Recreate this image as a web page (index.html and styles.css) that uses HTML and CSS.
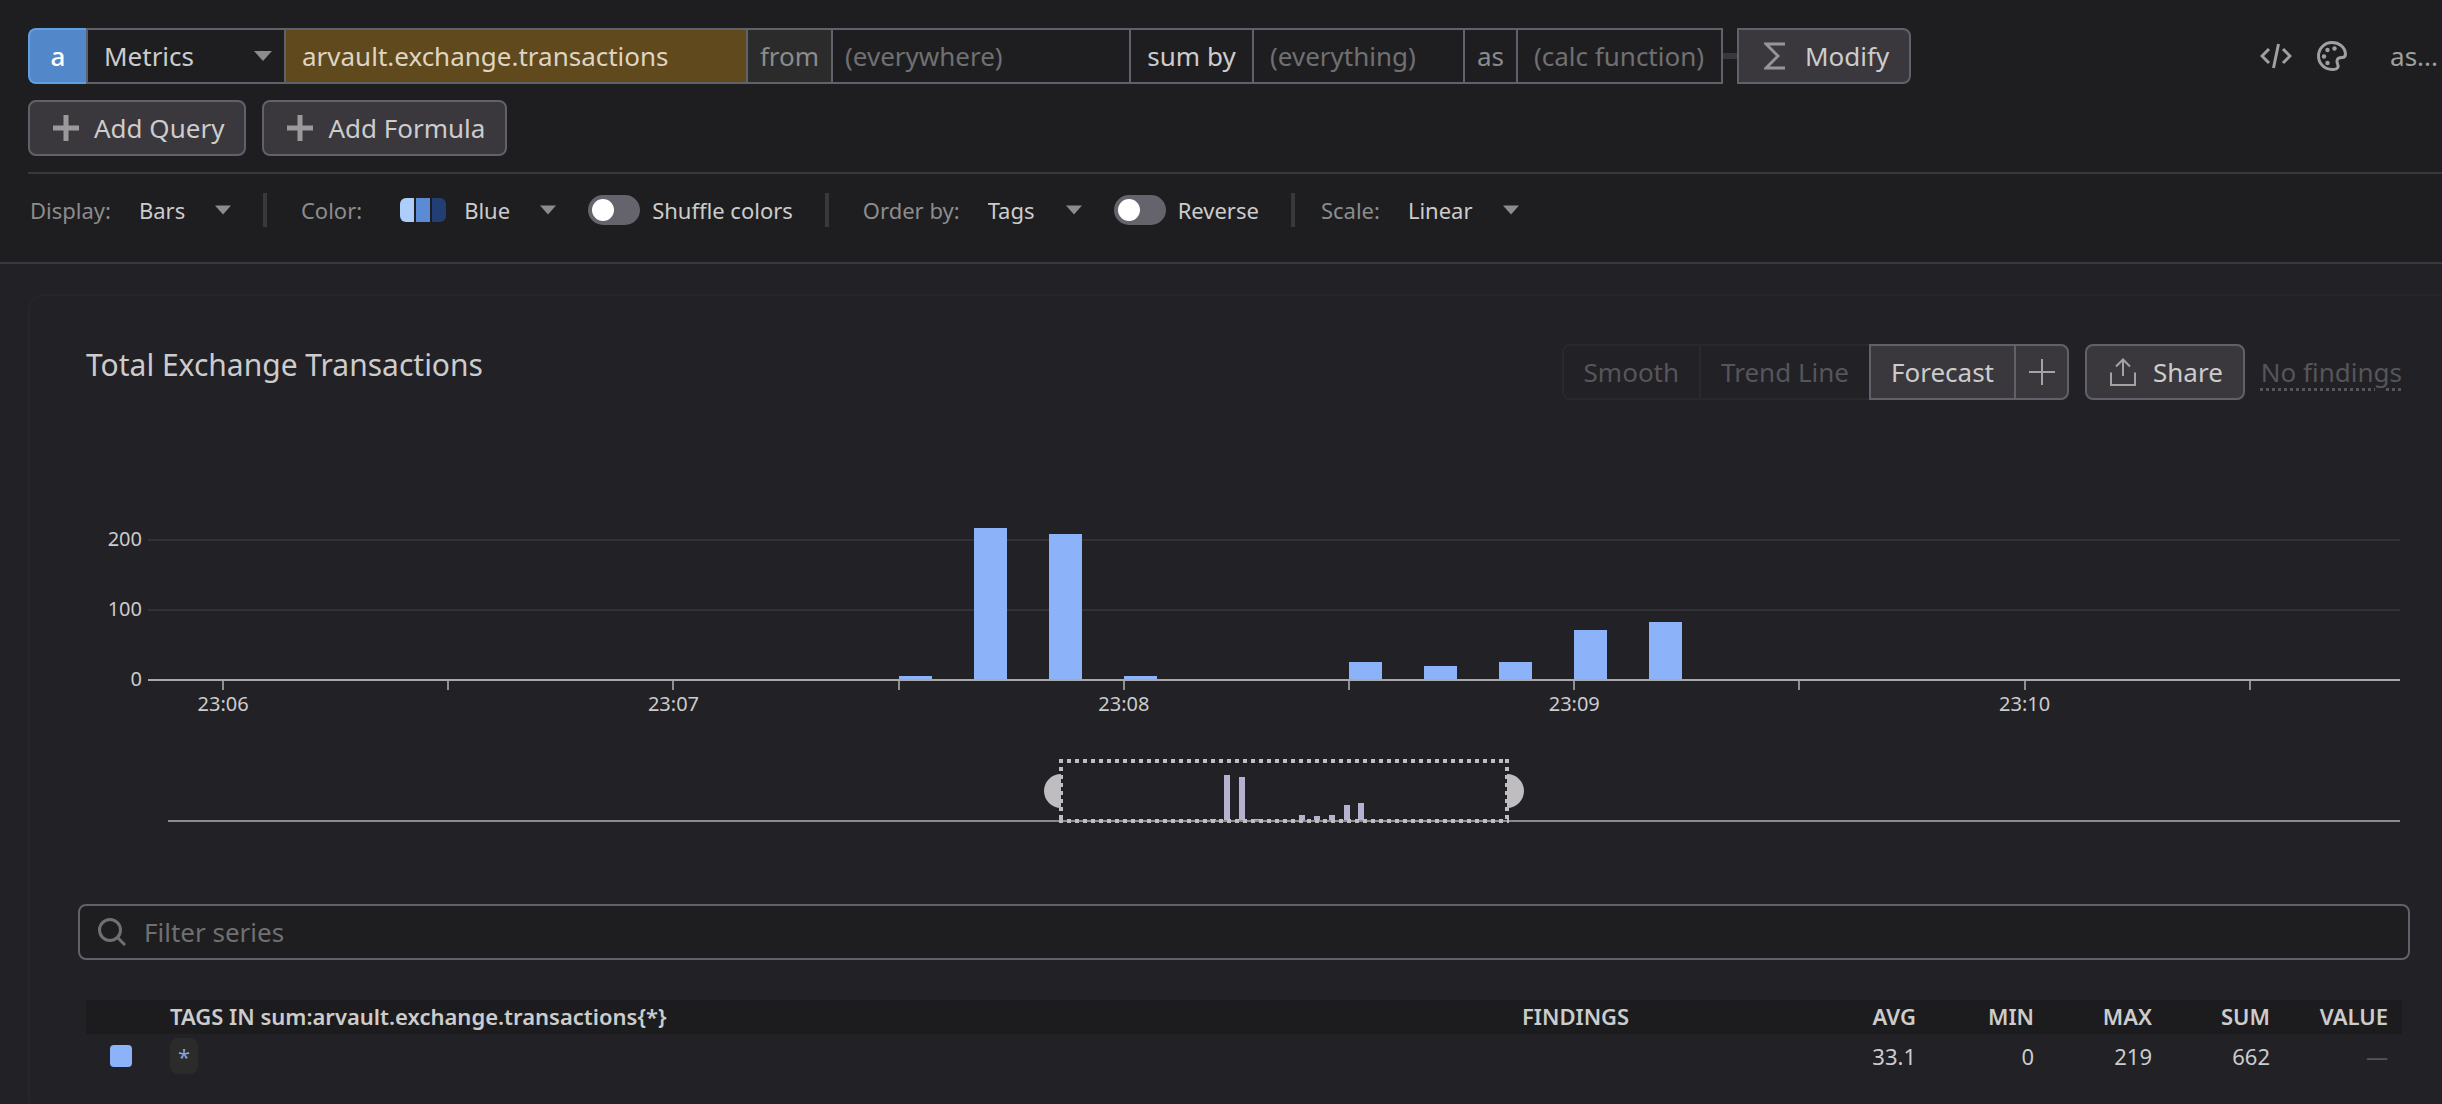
FILE: index.html
```html
<!DOCTYPE html>
<html lang="en">
<head>
<meta charset="utf-8">
<title>Metrics Explorer</title>
<link rel="stylesheet" href="styles.css">
</head>
<body>
<header class="toolbar">
  <div class="query-row">
    <form class="query">
      <button type="button" class="query-id">a</button>
      <span class="cell select source">
        <select aria-label="Data source"><option>Metrics</option></select>
        <svg class="caret" viewBox="0 0 18 10"><path d="M0 0h18l-9 10z"/></svg>
      </span>
      <input class="cell metric" aria-label="Metric" value="arvault.exchange.transactions">
      <label class="cell word from" for="scope">from</label>
      <input class="cell scope" id="scope" placeholder="(everywhere)">
      <button type="button" class="cell aggregate">sum by</button>
      <input class="cell group" aria-label="Group by" placeholder="(everything)">
      <label class="cell word as" for="calc">as</label>
      <input class="cell calc" id="calc" placeholder="(calc function)">
      <span class="connector"></span>
      <button type="button" class="btn modify">
        <svg class="icon-sigma" viewBox="0 0 22 28"><path d="M21 2H2l12 12L2 26h19"/></svg>
        Modify
      </button>
    </form>
    <div class="query-tools">
      <button type="button" class="tool" aria-label="Edit as code">
        <svg class="icon-code" viewBox="0 0 32 26"><path d="M9 6L2 13l7 7M23 6l7 7-7 7M18.500 1l-5 24"/></svg>
      </button>
      <button type="button" class="tool" aria-label="Style">
        <svg class="icon-palette" viewBox="0 0 30 30"><path d="M15 1.500C7.500 1.500 1.500 7.500 1.500 15S7.500 28.500 15 28.500c3 0 5.500-.5 6-2.500.6-2.500-1.500-4-1-6.500.4-2.500 2.500-3 5-3 2.500 0 3.500-1.500 3.500-3.500C28 6 22 1.500 15 1.500z"/><g><circle cx="10.500" cy="9" r="2.200"/><circle cx="17.500" cy="7.500" r="2.200"/><circle cx="7" cy="15.500" r="2.200"/><circle cx="10.500" cy="22" r="2.200"/></g></svg>
      </button>
      <button type="button" class="tool alias">as...</button>
    </div>
  </div>
  <div class="add-row">
    <button type="button" class="btn add"><svg class="icon-plus" viewBox="0 0 28 28"><path d="M14 1v26M1 14h26"/></svg>Add Query</button>
    <button type="button" class="btn add"><svg class="icon-plus" viewBox="0 0 28 28"><path d="M14 1v26M1 14h26"/></svg>Add Formula</button>
  </div>
  <div class="options">
    <label class="opt-label" for="display">Display:</label>
    <span class="select opt display"><select id="display"><option>Bars</option></select><svg class="caret" viewBox="0 0 18 10"><path d="M0 0h18l-9 10z"/></svg></span>
    <span class="divider"></span>
    <label class="opt-label" for="color">Color:</label>
    <span class="swatches"><i></i><i></i><i></i></span>
    <span class="select opt color"><select id="color"><option>Blue</option></select><svg class="caret" viewBox="0 0 18 10"><path d="M0 0h18l-9 10z"/></svg></span>
    <label class="switch"><input type="checkbox">Shuffle colors</label>
    <span class="divider"></span>
    <label class="opt-label" for="order">Order by:</label>
    <span class="select opt order"><select id="order"><option>Tags</option></select><svg class="caret" viewBox="0 0 18 10"><path d="M0 0h18l-9 10z"/></svg></span>
    <label class="switch"><input type="checkbox">Reverse</label>
    <span class="divider near"></span>
    <label class="opt-label" for="scale">Scale:</label>
    <span class="select opt scale"><select id="scale"><option>Linear</option></select><svg class="caret" viewBox="0 0 18 10"><path d="M0 0h18l-9 10z"/></svg></span>
  </div>
</header>

<main class="card">
  <div class="card-head">
    <h1>Total Exchange Transactions</h1>
    <div class="actions">
      <div class="btn-group">
        <button type="button" class="btn" disabled>Smooth</button>
        <button type="button" class="btn" disabled>Trend Line</button>
        <button type="button" class="btn">Forecast</button>
        <button type="button" class="btn plus" aria-label="Add forecast"><svg class="icon-thin-plus" viewBox="0 0 28 28"><path d="M14 1v26M1 14h26"/></svg></button>
      </div>
      <button type="button" class="btn share"><svg class="icon-share" viewBox="0 0 28 30"><path d="M2 15.500V28h24V15.500M14 19V2M7 9.500l7-7 7 7"/></svg>Share</button>
      <span class="findings">No findings</span>
    </div>
  </div>

  <section class="chart" aria-label="Transactions over time">
    <div class="y-axis"><span>200</span><span>100</span><span>0</span></div>
    <div class="plot">
      <div class="gridlines"><i></i><i></i><i></i></div>
      <div class="bars">
        <i style="grid-column:11;height:1.500%"></i>
        <i style="grid-column:12;height:72%"></i>
        <i style="grid-column:13;height:69%"></i>
        <i style="grid-column:14;height:1.500%"></i>
        <i style="grid-column:17;height:8%"></i>
        <i style="grid-column:18;height:6%"></i>
        <i style="grid-column:19;height:8%"></i>
        <i style="grid-column:20;height:23.500%"></i>
        <i style="grid-column:21;height:27%"></i>
      </div>
      <div class="ticks">
        <i style="grid-column:2"></i><i style="grid-column:5"></i><i style="grid-column:8"></i><i style="grid-column:11"></i><i style="grid-column:14"></i><i style="grid-column:17"></i><i style="grid-column:20"></i><i style="grid-column:23"></i><i style="grid-column:26"></i><i style="grid-column:29"></i>
      </div>
      <div class="times">
        <span style="grid-column:1/span 2">23:06</span><span style="grid-column:7/span 2">23:07</span><span style="grid-column:13/span 2">23:08</span><span style="grid-column:19/span 2">23:09</span><span style="grid-column:25/span 2">23:10</span>
      </div>
    </div>
  </section>

  <section class="overview" aria-label="Time range">
    <i style="grid-column:71;height:2%"></i>
    <i style="grid-column:72;height:73%"></i>
    <i style="grid-column:73;height:70%"></i>
    <i style="grid-column:74;height:2%"></i>
    <i style="grid-column:77;height:9%"></i>
    <i style="grid-column:78;height:6%"></i>
    <i style="grid-column:79;height:9%"></i>
    <i style="grid-column:80;height:25%"></i>
    <i style="grid-column:81;height:28%"></i>
    <div class="range"></div>
  </section>

  <label class="filter">
    <svg class="icon-search" viewBox="0 0 28 28"><circle cx="12" cy="12" r="10.500"/><path d="M19.500 19.500L27 27"/></svg>
    <input type="search" placeholder="Filter series" aria-label="Filter series">
  </label>

  <table class="series">
    <thead>
      <tr><th class="c-key"></th><th class="c-tags">TAGS IN sum:arvault.exchange.transactions{*}</th><th class="c-find">FINDINGS</th><th class="c-num">AVG</th><th class="c-num">MIN</th><th class="c-num">MAX</th><th class="c-num">SUM</th><th class="c-num">VALUE</th></tr>
    </thead>
    <tbody>
      <tr><td class="c-key"><span class="key"></span></td><td class="c-tags"><a class="tag" href="#">*</a></td><td class="c-find"></td><td class="c-num">33.1</td><td class="c-num">0</td><td class="c-num">219</td><td class="c-num">662</td><td class="c-num none">—</td></tr>
    </tbody>
  </table>
</main>
</body>
</html>
```

FILE: styles.css
```css
:root {
  --bg-top: #1e1e20;
  --bg: #222126;
  --line: #39383c;
  --edge: #62606a;
  --text: #cccccc;
  --muted: #8c8c8c;
  --dim: #707072;
  --button: #3a383d;
  --blue: #8cb2fa;
}
* { box-sizing: border-box; }
body {
  margin: 0;
  min-height: 100vh;
  overflow: hidden;
  background: var(--bg);
  color: var(--text);
  font: 26px/36px "Noto Sans", sans-serif;
}
button, input, select {
  margin: 0;
  padding: 0;
  border: 0;
  border-radius: 0;
  background: none;
  color: inherit;
  font: inherit;
  outline: 0;
}
select { appearance: none; }
input::placeholder { color: var(--dim); opacity: 1; }
svg { display: block; fill: none; stroke: currentColor; flex: none; }

/* toolbar */
.toolbar {
  padding: 28px 0 16px;
  background: var(--bg-top);
  border-bottom: 2px solid var(--line);
}
.query-row { display: flex; justify-content: space-between; align-items: center; padding: 0 4px 0 28px; }
.query { display: flex; height: 56px; }
.query-id {
  width: 58px;
  color: #fff;
  background: #5287ca;
  border: 2px solid #619ee2;
  border-right: 0;
  border-radius: 8px 0 0 8px;
  font-weight: 500;
}
.cell {
  height: 56px;
  border: 2px solid var(--edge);
  border-left-width: 0;
}
.source { width: 200px; border-left-width: 2px; }
.source select { padding-left: 16px; }
.source .caret { margin-right: 12px; }
.select { display: grid; align-items: center; }
.select > * { grid-area: 1 / 1; }
.select select { width: 100%; height: 100%; }
.caret { width: 18px; height: 10px; justify-self: end; pointer-events: none; fill: #8c8c8c; stroke: none; }
.metric { width: 462px; padding-left: 16px; background: #61491e; color: #ded5c3; }
.word { display: grid; place-items: center; color: var(--muted); }
.from { width: 85px; background: #2b2b2b; }
.scope { width: 298px; padding-left: 12px; }
.aggregate { width: 123px; }
.group { width: 211px; padding-left: 16px; }
.as { width: 53px; }
.calc { width: 205px; padding-left: 16px; }
.connector { align-self: center; width: 14px; height: 6px; background: var(--button); }
.btn {
  display: flex;
  align-items: center;
  justify-content: center;
  height: 56px;
  background: var(--button);
  border: 2px solid var(--edge);
  border-radius: 8px;
  white-space: nowrap;
}
.modify { padding: 0 20px 0 25px; gap: 19px; border-radius: 0 8px 8px 0; }
.icon-sigma { width: 22px; height: 28px; stroke-width: 3; color: #959595; }
.query-tools { display: flex; align-items: center; color: #a0a0a0; }
.tool { display: flex; }
.icon-code { width: 32px; height: 26px; stroke-width: 3; }
.icon-palette { width: 30px; height: 30px; margin: 0 43px 0 25px; stroke-width: 3; }
.icon-palette g { fill: currentColor; stroke: none; }
.add-row { display: flex; gap: 16px; margin-top: 16px; padding-left: 28px; }
.add { padding: 0 20px 0 22px; gap: 14px; }
.icon-plus { width: 28px; height: 28px; stroke-width: 5; color: #9a9a9a; }

.options {
  display: flex;
  align-items: center;
  height: 74px;
  margin: 16px 0 0 28px;
  padding-left: 2px;
  border-top: 2px solid var(--line);
  font-size: 22px;
}
.opt-label { color: var(--muted); }
.opt { height: 36px; margin-left: 28px; }
.opt .caret { width: 16px; }
.display { width: 92px; }
.color { width: 92px; margin-left: 18px; }
.order { width: 94px; }
.scale { width: 111px; }
.divider { width: 4px; height: 34px; margin: 0 34px 0 32px; background: var(--line); }
.divider.near { margin-right: 26px; }
.swatches { display: flex; gap: 2px; width: 46px; height: 24px; margin-left: 38px; border-radius: 6px; overflow: hidden; }
.swatches i { flex: 1; background: #adcdfb; }
.swatches i:nth-child(2) { background: #5a8bd4; }
.swatches i:nth-child(3) { background: #213f75; }
.switch { display: flex; align-items: center; gap: 12px; margin-left: 32px; }
.switch input { appearance: none; display: flex; width: 52px; height: 30px; padding: 4px; border-radius: 15px; background: #65636c; }
.switch input::before { content: ""; width: 22px; height: 22px; border-radius: 50%; background: #fff; }

/* graph card */
.card {
  margin: 30px 0 0 28px;
  padding: 48px 32px 24px 48px;
  border: 2px solid #262626;
  border-right: 0;
  border-bottom: 0;
  border-radius: 16px 0 0 0;
}
.card-head { display: flex; justify-content: space-between; padding: 0 8px; }
h1 { margin: 0; font-size: 30px; font-weight: 400; line-height: 42px; }
.actions { display: flex; align-items: center; gap: 16px; }
.btn-group { display: flex; }
.btn-group .btn { padding: 0 20px; border-radius: 0; border-right-width: 0; }
.btn-group .btn:disabled { background: none; border-color: #29292a; color: #56555a; }
.btn-group .btn:first-child { border-radius: 8px 0 0 8px; }
.btn-group .btn.plus { width: 55px; padding: 0; border-right-width: 2px; border-radius: 0 8px 8px 0; }
.icon-thin-plus { width: 28px; height: 28px; stroke-width: 2; color: #a3a3a3; }
.share { padding: 0 20px 0 22px; gap: 16px; }
.icon-share { width: 28px; height: 30px; stroke-width: 2; color: #a3a3a3; }
.findings { color: #56555a; text-decoration: underline dotted #56555a 3px; text-underline-offset: 6px; }

.chart { display: grid; grid-template-columns: 62px 1fr; padding: 0 10px 0 8px; margin-top: 69px; font-size: 20px; }
.y-axis { display: grid; grid-auto-rows: 70px; padding: 35px 6px 0 0; line-height: 70px; text-align: right; height: 245px; }
.plot { display: grid; grid-template-rows: 212px 9px 27px; }
.gridlines, .bars { grid-area: 1 / 1; }
.gridlines { display: grid; grid-template-rows: 70px 70px 2px; align-content: end; }
.gridlines i { border-top: 2px solid #323136; }
.gridlines i:last-child { border-color: #a9a8ab; }
.bars, .ticks, .times { display: grid; grid-template-columns: repeat(30, 1fr); }
.bars { align-items: end; margin-bottom: 2px; }
.bars i { grid-row: 1; width: 44%; background: var(--blue); }
.ticks i { margin-left: -1px; border-left: 2px solid #8f8e91; }
.times { align-items: end; line-height: 28px; text-align: center; }
.times span, .ticks i { grid-row: 1; }

.overview {
  display: grid;
  grid-template-columns: repeat(150, 1fr);
  align-items: end;
  height: 63px;
  margin: 42px 10px 0 90px;
  border-bottom: 2px solid #8b8b8b;
}
.overview i { grid-row: 1; width: 6px; background: #b5b1d0; }
.range {
  grid-area: 1 / 61 / 2 / span 30;
  position: relative;
  height: 64px;
  margin: 0 -2px -3px;
  background:
    repeating-linear-gradient(90deg, #bfbdc0 0 4px, transparent 4px 8px) 0 0 / 100% 4px no-repeat,
    repeating-linear-gradient(90deg, #bfbdc0 0 4px, transparent 4px 8px) 0 100% / 100% 4px no-repeat,
    repeating-linear-gradient(#bfbdc0 0 4px, transparent 4px 8px) 0 0 / 4px 100% no-repeat,
    repeating-linear-gradient(#bfbdc0 0 4px, transparent 4px 8px) 100% 0 / 4px 100% no-repeat;
}
.range::before, .range::after {
  content: "";
  position: absolute;
  top: 15px;
  width: 17px;
  height: 34px;
  background: #bfbdc0;
}
.range::before { right: calc(100% - 2px); border-radius: 17px 0 0 17px; }
.range::after { left: calc(100% - 2px); border-radius: 0 17px 17px 0; }

.filter {
  display: flex;
  align-items: center;
  gap: 18px;
  height: 56px;
  margin-top: 82px;
  padding: 0 18px;
  background: var(--bg-top);
  border: 2px solid var(--edge);
  border-radius: 8px;
}
.filter input { flex: 1; height: 100%; appearance: none; }
.icon-search { width: 28px; height: 28px; stroke-width: 3; color: var(--dim); }

.series { width: calc(100% - 16px); margin: 40px 8px 0; border-collapse: collapse; table-layout: fixed; font-size: 22px; line-height: 32px; text-align: left; }
.series th, .series td { padding: 0; }
.series th { padding-bottom: 2px; font-weight: 600; }
.series thead { background: #1c1c1e; }
.series .c-key { width: 84px; padding-left: 24px; }
.series .c-find { width: 290px; }
.series .c-num { width: 118px; text-align: right; padding-right: 14px; }
.series tbody td { height: 44px; vertical-align: middle; }
.key { display: block; width: 22px; height: 22px; border-radius: 4px; background: var(--blue); }
.tag { display: block; width: 28px; height: 36px; border-radius: 8px; background: #2b2b2b; color: #82a5dd; line-height: 36px; text-align: center; text-decoration: none; }
.none { color: #56555a; }
```
